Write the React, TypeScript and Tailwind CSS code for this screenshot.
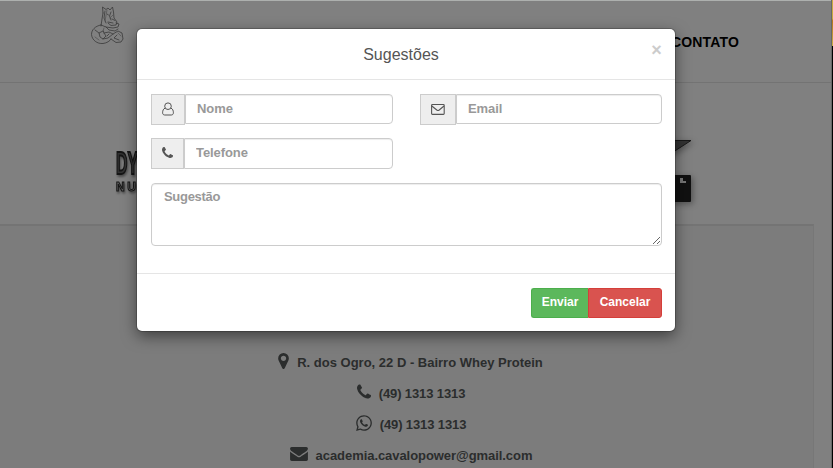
import React from "react";
import { FaWhatsapp } from "react-icons/fa";

function Mascot() {
  return (
    <svg className="ml-[91px] mt-[4px] h-[41px] w-[34px] shrink-0" viewBox="0 0 34 41" fill="none" stroke="#3a3a3a" strokeWidth=".8" strokeLinejoin="round" strokeLinecap="round">
      <path d="M12 8 11.500 2 15 4.500 17 3 19 5 21.500 2 22.500 7 23 13 26 17 25 20 20 20.500 17 18M12 8 11 14 10 21M14 6 13 13 15 18M20 7 18.500 11 20 15M16 9 17.500 10M21 14 24 15.500M17 17 22 18" />
      <path d="M10 20C4 21 .5 25 .5 29.500 1 35 6 39 12 38.500 16 38 19 36 20 34M10 20 15 22 22 23 27 22 28 19 25 18M15 22 18 25 24 26 27 24M20 34 25 37.500 30 37 32 34 31 28 27 26 22 29 17 33 12 34M12 26 8 28 9 32 12 34 15 31 13 28ZM4 25 8 28M13 28 18 27 22 29M26 30 23 33 28 35M18 29 16 31" />
      <path d="M16 5 14 16M22 10 19 13M4 32 8 35M13 23 12 26M27 28 30 31" stroke="#555" />
    </svg>
  );
}

function UserIcon() {
  return (
    <svg className="mb-[2px] h-[14px] w-[12px]" viewBox="0 0 12 14" fill="none" stroke="#555" strokeWidth="1">
      <circle cx="6" cy="4.200" r="3.300" />
      <path d="M3.200 6.100C1.300 6.700.6 8.700.6 10.800c0 1.300.8 2.200 2.100 2.200h6.600c1.300 0 2.100-.9 2.100-2.200C11.400 8.700 10.700 6.700 8.800 6.100" />
    </svg>
  );
}

function MailIcon() {
  return (
    <svg className="mb-[2px] h-[12px] w-[14px]" viewBox="0 0 14 12" fill="none" stroke="#555" strokeWidth="1.100">
      <rect x=".6" y="1.500" width="12.600" height="9.900" rx=".8" />
      <path d="M.8 3 5.800 7q1.200.9 2.400 0L13 3" />
    </svg>
  );
}

function PhoneIcon({ className }: { className: string }) {
  return (
    <svg className={className} viewBox="192 128 1408 1408" fill="currentColor">
      <path d="M1600 1240q0 27-10 70.500t-21 68.500q-21 50-122 106-94 51-186 51-27 0-53-3.500t-57.500-12.500-47-14.500-55.500-20.500-49-18q-98-35-175-83-127-79-264-216t-216-264q-48-77-83-175-3-9-18-49t-20.500-55.500-14.500-47-12.500-57.500-3.500-53q0-92 51-186 56-101 106-122 25-11 68.500-21t70.500-10q14 0 21 3 18 6 53 76 11 19 30 54t35 63.500 31 53.500q3 4 17.500 25t21.500 35.500 7 28.500q0 20-28.500 50t-62 55-62 53-28.500 46q0 9 5 22.500t8.500 20.500 14 24 11.500 19q76 137 174 235t235 174q2 1 19 11.500t24 14 20.500 8.500 22.500 5q18 0 46-28.500t53-62 55-62 50-28.500q14 0 28.500 7t35.500 21.500 25 17.500q25 15 53.500 31t63.500 35 54 30q70 35 76 53 3 7 3 21z" />
    </svg>
  );
}

function MarkerIcon() {
  return (
    <svg className="mb-[3px] h-[16px] w-[11px]" viewBox="384 128 1024 1536" fill="currentColor">
      <path d="M1152 640q0-106-75-181t-181-75-181 75-75 181 75 181 181 75 181-75 75-181zm256 0q0 109-33 179l-364 774q-16 33-47.500 52t-67.500 19-67.500-19-46.500-52l-365-774q-33-70-33-179 0-212 150-362t362-150 362 150 150 362z" />
    </svg>
  );
}

function EnvelopeIcon() {
  return (
    <svg className="mb-[3px] h-[14px] w-[18px]" viewBox="0 256 1792 1408" fill="currentColor">
      <path d="M1792 710v794q0 66-47 113t-113 47h-1472q-66 0-113-47t-47-113v-794q44 49 101 87 362 246 497 345 57 42 92.500 65.500t94.500 48 110 24.500h2q51 0 110-24.500t94.500-48 92.500-65.500q170-123 498-345 57-39 100-87zm0-294q0 79-49 151t-122 123q-376 261-468 325-10 7-42.500 31t-54 38.500-52 32.500-57.500 27-50 9h-2q-23 0-50-9t-57.500-27-52-32.500-54-38.500-42.500-31q-91-64-262-182.500t-205-142.500q-62-42-117-115.500t-55-136.500q0-78 41.500-130t118.500-52h1472q65 0 112.500 47t47.500 113z" />
    </svg>
  );
}

function Field({ icon, label, addon, input }: { icon: React.ReactNode; label: string; addon: string; input: string }) {
  return (
    <div className="flex h-[31px] items-start">
      <span className={"flex h-[31px] shrink-0 items-center justify-center border border-[#ccc] bg-[#eee] text-[#555] " + addon}>{icon}</span>
      <input
        placeholder={label}
        className={"min-w-0 flex-1 rounded-r-[4px] border border-[#ccc] bg-white px-[11px] text-[13px] font-bold tracking-[-0.08px] shadow-[inset_0_1px_1px_rgba(0,0,0,0.075)] outline-none placeholder:text-[#999] " + input}
      />
    </div>
  );
}

function Contact({ icon, gap, children }: { icon: React.ReactNode; gap: string; children: React.ReactNode }) {
  return (
    <div className={"flex h-[31px] items-center justify-center whitespace-nowrap text-[13px] font-bold text-[#2b2d2d] " + gap}>
      {icon}
      <span>{children}</span>
    </div>
  );
}

export default function App() {
  return (
    <div className="relative h-[468px] w-[833px] overflow-hidden bg-[#808080] font-['Liberation_Sans',Arial,sans-serif]">
      <div className="flex h-full">
        <main className="flex w-[831px] flex-col">
          <header className="flex h-[83px] shrink-0 items-start border-b border-t border-b-[#737373] border-t-[#adb0ae]">
            <Mascot />
            <span className="ml-[546px] mt-[32px] text-[14px] font-bold leading-[18px] tracking-[.15px] text-black">CONTATO</span>
          </header>
          <section className="flex h-[141px] shrink-0 items-start justify-between pl-[115px] pr-[139px]">
            <svg className="mt-[63px] h-[52px] w-[24px] drop-shadow-[1px_2px_1px_rgba(0,0,0,.4)]" viewBox="0 0 24 52" fill="#333" stroke="#151515" fontFamily="Liberation Sans" fontWeight="700">
              <text x="1" y="28" fontSize="31" textLength="22" lengthAdjust="spacingAndGlyphs" strokeWidth="2">DY</text>
              <text x="1" y="45" fontSize="12" textLength="20" lengthAdjust="spacing" fill="#666" strokeWidth="1">NU</text>
            </svg>
            <svg className="mt-[52px] h-[74px] w-[36px] drop-shadow-[2px_2px_3px_rgba(0,0,0,.35)]" viewBox="0 0 36 74">
              <path d="M0 5.500h35L11 21H0Z" fill="#333" stroke="#181818" />
              <rect y="40" width="35" height="27" rx="1" fill="#111" />
              <path d="M24 43h3v3h3v2h-6Z" fill="#777" />
            </svg>
          </section>
          <section className="min-h-0 w-[814px] flex-1 overflow-hidden border-r border-t-2 border-r-[#777] border-t-[#747474] bg-[#7c7c7c] pt-[121px]">
            <Contact gap="gap-[8px] pl-[8px]" icon={<MarkerIcon />}>R. dos Ogro, 22 D - Bairro Whey Protein</Contact>
            <Contact gap="gap-[8px] pl-[9px] tracking-[-0.12px]" icon={<PhoneIcon className="mb-[4px] h-[15px] w-[14px]" />}>(49) 1313 1313</Contact>
            <Contact gap="gap-[8px] pl-[9px] tracking-[-0.12px]" icon={<FaWhatsapp className="mb-[3px] h-[18px] w-[16px]" />}>(49) 1313 1313</Contact>
            <Contact gap="gap-[8px] pl-[9px] tracking-[-0.06px]" icon={<EnvelopeIcon />}>academia.cavalopower@gmail.com</Contact>
          </section>
        </main>
        <aside className="flex w-[2px] flex-col border-l border-[#686868] bg-black">
          <div className="h-[46px] bg-gradient-to-b from-[#c9aa40] from-40% via-[#b8791c] via-45% to-[#c9ad48]" />
        </aside>
      </div>

      <div role="dialog" className="absolute left-[137px] top-[29px] flex h-[302px] w-[538px] flex-col rounded-[5px] bg-white shadow-[0_5px_15px_rgba(0,0,0,.5),0_0_0_1px_rgba(0,0,0,.2)]">
        <div className="grid h-[51px] grid-cols-[20px_1fr_30px] border-b border-[#e5e5e5]">
          <h4 className="col-start-2 pt-[16px] text-center text-[16px] leading-[20px] text-[#555]">Sugestões</h4>
          <button className="self-start pr-[7px] pt-[11px] text-[18px] font-bold leading-[20px] text-[#ccc]">×</button>
        </div>
        <form className="flex flex-1 flex-col pl-[14px] pr-[13px] pt-[14px]">
          <div className="grid grid-cols-[242px_242px] gap-x-[27px] gap-y-[13px]">
            <Field addon="w-[34px]" input="h-[30px] pb-[2px]" label="Nome" icon={<UserIcon />} />
            <Field addon="w-[36px]" input="h-[30px] pb-[2px]" label="Email" icon={<MailIcon />} />
            <Field addon="w-[33px]" input="h-[31px] pb-[3px]" label="Telefone" icon={<PhoneIcon className="mb-[2px] h-[11px] w-[11px]" />} />
          </div>
          <textarea placeholder="Sugestão" className="mt-[14px] h-[63px] w-full resize rounded-[4px] border border-[#ccc] px-[12px] py-[4px] text-[13px] font-bold leading-[18px] tracking-[-0.3px] shadow-[inset_0_1px_1px_rgba(0,0,0,0.075)] outline-none placeholder:text-[#999]" />
        </form>
        <div className="flex h-[58px] justify-end border-t border-[#e5e5e5] pr-[13px] pt-[14px]">
          <button className="h-[30px] w-[57px] rounded-l-[3px] border border-r-0 border-[#4cae4c] bg-[#5cb85c] pb-[3px] text-[12px] font-bold text-white">Enviar</button>
          <button className="h-[30px] w-[74px] rounded-r-[3px] border border-[#d43f3a] bg-[#d9534f] pb-[3px] text-[12px] font-bold text-white">Cancelar</button>
        </div>
      </div>
    </div>
  );
}
